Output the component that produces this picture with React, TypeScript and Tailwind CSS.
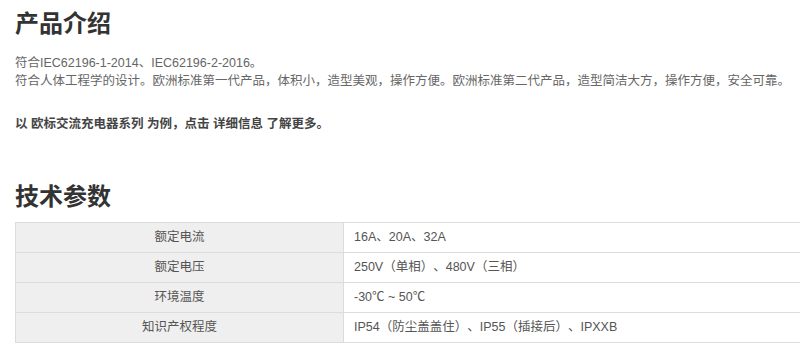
import React from 'react';

const specs: [string, string][] = [
  ['额定电流', '16A、20A、32A'],
  ['额定电压', '250V（单相）、480V（三相）'],
  ['环境温度', '-30℃ ~ 50℃'],
  ['知识产权程度', 'IP54（防尘盖盖住）、IP55（插接后）、IPXXB'],
];

const font = { fontFamily: '"Liberation Sans", "Noto Sans CJK SC", sans-serif' };

export default function App() {
  return (
    <div className="w-[800px] h-[345px] overflow-hidden bg-white text-[#666] [text-spacing-trim:space-all]" style={font}>
      <div className="pl-[15px]">
        <h2 className="pt-[8px] text-[24px] leading-[32px] font-bold text-[#333]">产品介绍</h2>

        <div className="mt-[14px] text-[12.5px] leading-[18px]">
          <p>符合IEC62196-1-2014、IEC62196-2-2016。</p>
          <p>符合人体工程学的设计。欧洲标准第一代产品，体积小，造型美观，操作方便。欧洲标准第二代产品，造型简洁大方，操作方便，安全可靠。</p>
          <p className="mt-[25px] font-bold text-[#444]">以 欧标交流充电器系列 为例，点击 详细信息 了解更多。</p>
        </div>

        <h2 className="mt-[48px] text-[24px] leading-[32px] font-bold text-[#333]">技术参数</h2>

        {/* 参数表 */}
        <table className="mt-[9px] w-[800px] border-collapse text-[12.5px] text-[#555]">
          <tbody>
            {specs.map(([k, v]) => (
              <tr key={k} className="h-[30px]">
                <td className="w-[328px] border border-[#dcdcdc] bg-[#efefef] text-center">{k}</td>
                <td className="border border-[#dcdcdc] pl-[10px]">{v}</td>
              </tr>
            ))}
          </tbody>
        </table>
      </div>
    </div>
  );
}
